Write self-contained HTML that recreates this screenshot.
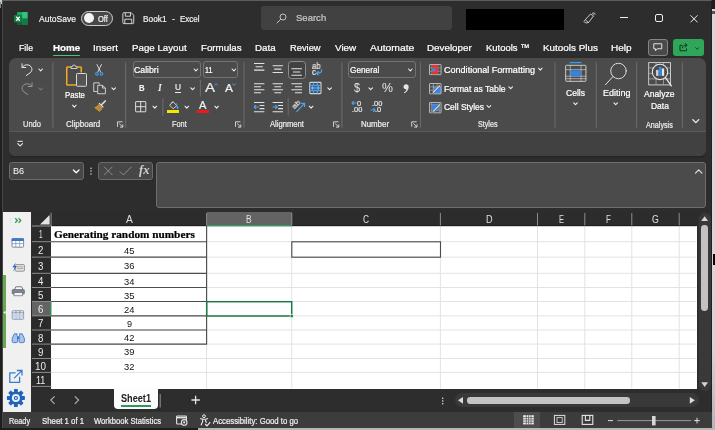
<!DOCTYPE html>
<html>
<head>
<meta charset="utf-8">
<title>Book1 - Excel</title>
<style>
*{box-sizing:border-box;margin:0;padding:0}
html,body{width:715px;height:430px;overflow:hidden;background:#1e1e1e;font-family:"Liberation Sans",sans-serif;}
#w{position:relative;width:715px;height:430px;background:#1e1e1e;overflow:hidden;color:#fff;font-size:9px}
.a{position:absolute}
.t{position:absolute;white-space:nowrap;transform-origin:0 50%;-webkit-text-stroke:0.22px currentColor}
.g{will-change:transform}
#tx{position:absolute;left:0;top:0;width:715px;height:430px;will-change:transform}
svg{position:absolute;overflow:visible}
#win{left:2px;top:0;width:710px;height:428px;background:#2d2d2d;border:1px solid #484848;border-top-color:#5e5e5e;border-right-color:#222}
#search{left:261px;top:6px;width:191px;height:24px;background:#414141;border-radius:3px}
#blk{left:466px;top:9px;width:98px;height:21px;background:#000}
#rib{left:9px;top:58px;width:697px;height:98px;background:#4b4b4b;border-radius:7px}
#ribline{left:9px;top:130.6px;width:697px;height:1.4px;background:#595959}
.sep{position:absolute;width:1px;background:#6a6a6a;top:62px;height:66px}
.ssep{position:absolute;width:1px;background:#6a6a6a;height:17px}
.box{position:absolute;top:61px;height:17px;border:1px solid #737373;border-radius:3px}
#nbox{left:9px;top:162px;width:75px;height:18px;background:#474747;border:1px solid #6a6a6a;border-radius:3px}
#fxbox{left:98px;top:162px;width:55px;height:18px;background:#474747;border:1px solid #6a6a6a;border-radius:3px}
#finp{left:156px;top:162px;width:550px;height:46px;background:#4b4b4b;border:1px solid #6e6e6e;border-radius:3px}
#side{left:3px;top:212px;width:28px;height:200px;background:#f0f0f0}
#sgreen{left:3px;top:275px;width:3px;height:73px;background:#6aa84f}
#grid{left:51px;top:226px;width:646px;height:163px;background:#fff}
#colh{left:32px;top:212px;width:665px;height:14px;background:#2c2c2c}
#rowh{left:32px;top:226px;width:19px;height:161.5px;background:#2b2b2b}
.hv{position:absolute;top:213px;width:1px;height:13px;background:#7a7a7a}
.rh{position:absolute;left:32px;width:19px;height:1px;background:#7a7a7a}
.gv{position:absolute;top:226px;width:1px;height:162px;background:#e2e2e2}
.gh{position:absolute;left:52px;width:645px;height:1px;background:#e2e2e2}
.bh{position:absolute;left:51px;width:156px;height:1px;background:#555}
#vs{left:699px;top:212.6px;width:11.6px;height:178px;background:#393939;border-radius:5.8px}
#vth{left:701.3px;top:224.8px;width:6.7px;height:86.2px;background:#c2c2c2;border-radius:3.4px}
#hs{left:454.6px;top:393px;width:244.6px;height:14px;background:#393939;border-radius:7px}
#hth{left:466.7px;top:397px;width:163.8px;height:6.6px;background:#c4c4c4;border-radius:3.3px}
#status{left:3px;top:412px;width:708.5px;height:15.6px;background:#3c3c3c}
#vsel{left:514px;top:412px;width:26px;height:15.6px;background:#4d4d4d}
#stab{left:114.4px;top:388.6px;width:43.6px;height:20.6px;background:#fdfdfd;border-radius:0 0 4px 4px}
#stabu{left:120.6px;top:405.4px;width:30.4px;height:2px;background:#2a9a5a}
</style>
</head>
<body>
<div id="w">
<div id="win" class="a"></div>
<!-- outside-window bits -->
<div class="a" style="left:0;top:0;width:1.5px;height:4px;background:#c8c8c8"></div>
<div class="a" style="left:0;top:2px;width:1px;height:6px;background:#8a8a8a"></div>
<div class="a" style="left:712px;top:8.5px;width:3px;height:421.5px;background:linear-gradient(#d8d8d8,#d6d6d6 80%,#b4b4b4)"></div>
<div class="a" style="left:197.5px;top:427.7px;width:517.5px;height:2.3px;background:#b6b6b6"></div>
<div class="a" style="left:712.8px;top:253.8px;width:2.2px;height:11px;background:#0a0a0a"></div>
<div class="a" style="left:712.4px;top:11px;width:2.6px;height:3px;background:#555"></div>
<!-- TITLE -->
<div id="search" class="a"></div>
<div id="blk" class="a"></div>
<svg style="left:14px;top:11.5px" width="13.5" height="13" viewBox="0 0 27 26">
 <rect x="6" y="0" width="21" height="26" rx="2" fill="#21a366"/>
 <rect x="16.5" y="0" width="10.5" height="13" fill="#33c481"/>
 <rect x="16.5" y="13" width="10.5" height="13" fill="#107c41"/>
 <rect x="6" y="13" width="10.5" height="13" fill="#185c37"/>
 <rect x="0" y="6" width="16" height="15" rx="1.5" fill="#107c41"/>
 <path d="M4.5 9.5 L11.5 17.5 M11.5 9.5 L4.5 17.5" stroke="#fff" stroke-width="2.4" fill="none"/>
</svg>
<!-- autosave toggle -->
<div class="a" style="left:80.5px;top:10.5px;width:32.5px;height:15.5px;border:1.1px solid #cdcdcd;border-radius:8px;background:#484848"></div>
<div class="a" style="left:83.5px;top:13.3px;width:10px;height:10px;border-radius:5px;background:#f4f4f4"></div>
<!-- save icon -->
<svg style="left:121.5px;top:12.3px" width="12.6" height="12.4" viewBox="0 0 25 25" fill="none" stroke="#dcdcdc" stroke-width="1.9">
 <path d="M1.5 3.5 a2 2 0 0 1 2-2 H18.5 L23.5 6.5 V21.5 a2 2 0 0 1-2 2 H3.5 a2 2 0 0 1-2-2 Z"/>
 <path d="M6.5 1.5 V8.5 H17 V1.5"/>
 <path d="M5.5 23.5 V14.5 H19.5 V23.5"/>
</svg>
<!-- search icon -->
<svg style="left:276px;top:12.5px" width="11" height="11" viewBox="0 0 22 22" fill="none" stroke="#c8c8c8" stroke-width="1.9">
 <circle cx="14" cy="8" r="6"/><path d="M9.6 12.4 L1.5 20.5"/>
</svg>
<!-- pen icon -->
<svg style="left:583px;top:12px" width="13" height="12" viewBox="0 0 26 24" fill="none" stroke="#e0e0e0" stroke-width="1.7" stroke-linejoin="round">
 <path d="M15 4 L21 8 L11 21 L5 22 L2 19 L4 16 Z"/>
 <path d="M5 16 L11 21"/>
 <path d="M18 2 L23 5.5 M21 1 L25 4"/>
</svg>
<!-- window controls -->
<div class="a" style="left:620px;top:17px;width:7.5px;height:1.2px;background:#f0f0f0"></div>
<div class="a" style="left:654.5px;top:14.3px;width:8.5px;height:8.2px;border:1.2px solid #f0f0f0;border-radius:2px"></div>
<svg style="left:690.3px;top:14.8px" width="8" height="7.6" viewBox="0 0 16 15" fill="none" stroke="#f0f0f0" stroke-width="2"><path d="M1 0.5 L15 14.5 M15 0.5 L1 14.5"/></svg>

<!-- TABS -->
<div class="a" style="left:52.5px;top:54.7px;width:27.5px;height:1.6px;background:#49c27a;border-radius:1px"></div>
<div class="a" style="left:648px;top:38.5px;width:19.5px;height:17.5px;background:#4a4a4a;border:1px solid #858585;border-radius:3px"></div>
<svg style="left:652.8px;top:42.5px" width="9.5" height="8.5" viewBox="0 0 19 17" fill="none" stroke="#f0f0f0" stroke-width="1.8" stroke-linejoin="round">
 <path d="M1.5 1.5 H17.5 V11.5 H8.5 L5 15.5 V11.5 H1.5 Z"/>
</svg>
<div class="a" style="left:673px;top:38.5px;width:30.5px;height:17.5px;background:#2fa65a;border-radius:3px"></div>
<svg style="left:678.5px;top:42px" width="9.5" height="9.5" viewBox="0 0 19 19" fill="none" stroke="#14301f" stroke-width="1.9" stroke-linejoin="round">
 <path d="M7 6.5 H2 V17.5 H15 V13"/>
 <path d="M6.5 12.5 C7 8 10 6.5 14 6.5 M11.5 2.5 L16.5 6.5 L11.5 10.5"/>
</svg>
<svg style="left:694.8px;top:47px" width="4.4" height="3" viewBox="0 0 9 6" fill="none" stroke="#14301f" stroke-width="1.8"><path d="M0.8 0.8 L4.5 4.8 L8.2 0.8"/></svg>

<!-- RIBBON -->
<div id="rib" class="a"></div>
<div class="a" style="left:9px;top:131.5px;width:697px;height:24.5px;background:#414141;border-radius:0 0 7px 7px"></div>
<div class="a" style="left:11px;top:156px;width:693px;height:2.5px;background:linear-gradient(#242424,#2d2d2d)"></div>
<div id="ribline" class="a"></div>
<!-- separators -->
<svg style="left:0;top:0" width="715" height="160" fill="none" stroke="#6a6a6a" stroke-width="1.1">
 <path d="M52.9 62.2 V127.8 M125.6 62.2 V127.8 M244.0 62.2 V127.8 M341.9 62.2 V127.8 M420.5 62.2 V127.8 M555.0 62.2 V127.8 M596.3 62.2 V127.8 M636.6 62.2 V127.8 M682.4 62.2 V127.8"/>
 <path d="M200.4 79.8 V96.6 M162.9 98.2 V115.4 M288.2 97.8 V115.4"/>
</svg>
<!-- chevrons (white) -->
<svg style="left:0;top:0" width="715" height="160" stroke="#f2f2f2">
 <path transform="translate(38.4 68.4)" d="M0.5 0.6 L2.3 2.5 L4.1 0.6" fill="none" stroke-width="1.05" stroke-linecap="round" stroke-linejoin="round"/>
 <path transform="translate(38.4 87.4)" d="M0.5 0.6 L2.3 2.5 L4.1 0.6" fill="none" stroke-width="1.05" stroke-linecap="round" stroke-linejoin="round" stroke="#7a7a7a"/>
 <path transform="translate(72 104.6)" d="M0.5 0.6 L2.3 2.5 L4.1 0.6" fill="none" stroke-width="1.05" stroke-linecap="round" stroke-linejoin="round"/>
 <path transform="translate(111.4 87.2)" d="M0.5 0.6 L2.3 2.5 L4.1 0.6" fill="none" stroke-width="1.05" stroke-linecap="round" stroke-linejoin="round"/>
 <path transform="translate(193.6 68.4)" d="M0.5 0.6 L2.3 2.5 L4.1 0.6" fill="none" stroke-width="1.05" stroke-linecap="round" stroke-linejoin="round"/>
 <path transform="translate(231.6 68.4)" d="M0.5 0.6 L2.3 2.5 L4.1 0.6" fill="none" stroke-width="1.05" stroke-linecap="round" stroke-linejoin="round"/>
 <path transform="translate(190.3 87.2)" d="M0.5 0.6 L2.3 2.5 L4.1 0.6" fill="none" stroke-width="1.05" stroke-linecap="round" stroke-linejoin="round"/>
 <path transform="translate(152.5 105.6)" d="M0.5 0.6 L2.3 2.5 L4.1 0.6" fill="none" stroke-width="1.05" stroke-linecap="round" stroke-linejoin="round"/>
 <path transform="translate(184.5 105.6)" d="M0.5 0.6 L2.3 2.5 L4.1 0.6" fill="none" stroke-width="1.05" stroke-linecap="round" stroke-linejoin="round"/>
 <path transform="translate(214.3 105.6)" d="M0.5 0.6 L2.3 2.5 L4.1 0.6" fill="none" stroke-width="1.05" stroke-linecap="round" stroke-linejoin="round"/>
 <path transform="translate(327.3 87.2)" d="M0.5 0.6 L2.3 2.5 L4.1 0.6" fill="none" stroke-width="1.05" stroke-linecap="round" stroke-linejoin="round"/>
 <path transform="translate(308.8 105.6)" d="M0.5 0.6 L2.3 2.5 L4.1 0.6" fill="none" stroke-width="1.05" stroke-linecap="round" stroke-linejoin="round"/>
 <path transform="translate(408 68.4)" d="M0.5 0.6 L2.3 2.5 L4.1 0.6" fill="none" stroke-width="1.05" stroke-linecap="round" stroke-linejoin="round"/>
 <path transform="translate(368.4 87.2)" d="M0.5 0.6 L2.3 2.5 L4.1 0.6" fill="none" stroke-width="1.05" stroke-linecap="round" stroke-linejoin="round"/>
 <path transform="translate(538 67.6)" d="M0.5 0.6 L2.3 2.5 L4.1 0.6" fill="none" stroke-width="1.05" stroke-linecap="round" stroke-linejoin="round"/>
 <path transform="translate(508.4 86.2)" d="M0.5 0.6 L2.3 2.5 L4.1 0.6" fill="none" stroke-width="1.05" stroke-linecap="round" stroke-linejoin="round"/>
 <path transform="translate(486.6 105)" d="M0.5 0.6 L2.3 2.5 L4.1 0.6" fill="none" stroke-width="1.05" stroke-linecap="round" stroke-linejoin="round"/>
 <path transform="translate(573.2 102.2)" d="M0.5 0.6 L2.3 2.5 L4.1 0.6" fill="none" stroke-width="1.05" stroke-linecap="round" stroke-linejoin="round"/>
 <path transform="translate(613.4 102.2)" d="M0.5 0.6 L2.3 2.5 L4.1 0.6" fill="none" stroke-width="1.05" stroke-linecap="round" stroke-linejoin="round"/>
 <path transform="translate(117 121.3)" d="M0.5 5.5 V0.5 H5.5 M2.2 2.2 L5.6 5.6 M5.8 3 V5.8 H3" fill="none" stroke="#e0e0e0" stroke-width="0.9"/>
 <path transform="translate(235 121.3)" d="M0.5 5.5 V0.5 H5.5 M2.2 2.2 L5.6 5.6 M5.8 3 V5.8 H3" fill="none" stroke="#e0e0e0" stroke-width="0.9"/>
 <path transform="translate(333 121.3)" d="M0.5 5.5 V0.5 H5.5 M2.2 2.2 L5.6 5.6 M5.8 3 V5.8 H3" fill="none" stroke="#e0e0e0" stroke-width="0.9"/>
 <path transform="translate(411.2 121.3)" d="M0.5 5.5 V0.5 H5.5 M2.2 2.2 L5.6 5.6 M5.8 3 V5.8 H3" fill="none" stroke="#e0e0e0" stroke-width="0.9"/>
 <path d="M692.8 119.6 L695.8 122.6 L698.8 119.6" fill="none" stroke="#f2f2f2" stroke-width="1.3" stroke-linecap="round" stroke-linejoin="round"/>
 <!-- QAT customize -->
 <path d="M17.5 141.3 H22.8" stroke="#f2f2f2" stroke-width="1" fill="none"/>
 <path d="M17.8 143.6 L20.15 146 L22.5 143.6" fill="none" stroke="#f2f2f2" stroke-width="1.05" stroke-linecap="round" stroke-linejoin="round"/>
</svg>
<!-- undo / redo -->
<svg style="left:20.5px;top:63px" width="12" height="13" viewBox="0 0 24 26" fill="none" stroke="#ececec" stroke-width="1.9" stroke-linecap="round" stroke-linejoin="round">
 <path d="M2 1.5 V9 H9.5"/><path d="M2.5 8.5 C6 3.5 13 2 18 5.5 C23 9 23 16 18.5 19.5 L10.5 25"/>
</svg>
<svg style="left:20.5px;top:81.6px" width="12" height="13" viewBox="0 0 24 26" fill="none" stroke="#9a9a9a" stroke-width="1.9" stroke-linecap="round" stroke-linejoin="round">
 <path d="M22 1.5 V9 H14.5"/><path d="M21.5 8.5 C18 3.5 11 2 6 5.5 C1 9 1 16 5.5 19.5 L13.5 25"/>
</svg>
<!-- paste -->
<svg style="left:65.5px;top:64px" width="21.5" height="23" viewBox="0 0 43 46" fill="none" stroke-linejoin="round">
 <path d="M10 6 H3 a1.5 1.5 0 0 0 -1.5 1.5 V40.5 a1.5 1.5 0 0 0 1.5 1.5 H20 M22 6 H29 a1.5 1.5 0 0 1 1.5 1.5 V17" stroke="#f5a623" stroke-width="3.1"/>
 <path d="M10 9 V5.5 H12.5 a3.5 3.5 0 0 1 7 0 H22 V9 Z" stroke="#d8d8d8" stroke-width="1.8" fill="#4b4b4b"/>
 <rect x="21" y="19" width="20" height="25.5" rx="1.5" stroke="#d8d8d8" stroke-width="2" fill="#555"/>
</svg>
<!-- cut -->
<svg style="left:95.4px;top:64px" width="8.4" height="12" viewBox="0 0 17 24" fill="none" stroke-linecap="round">
 <path d="M4 1 L11.6 16.4 M13 1 L5.4 16.4" stroke="#ececec" stroke-width="1.7"/>
 <circle cx="3.9" cy="19.6" r="2.7" stroke="#3d9cf0" stroke-width="2.2"/><circle cx="13.1" cy="19.6" r="2.7" stroke="#3d9cf0" stroke-width="2.2"/>
</svg>
<!-- copy -->
<svg style="left:93.2px;top:81.8px" width="13.4" height="12.6" viewBox="0 0 27 25" fill="none" stroke="#dcdcdc" stroke-width="1.8" stroke-linejoin="round">
 <path d="M9 19 H1.5 V1.5 H12.5 V5"/>
 <path d="M9.5 6.5 H19 L25 12 V23.5 H9.5 Z" fill="#4b4b4b"/><path d="M19 6.5 V12 H25"/>
</svg>
<!-- format painter -->
<svg style="left:94px;top:100.4px" width="12.6" height="11.8" viewBox="0 0 25 24" fill="none" stroke-linejoin="round">
 <path d="M22.6 2 L15.4 9.2" stroke="#e0e0e0" stroke-width="3.4" stroke-linecap="round"/>
 <path d="M10.4 7 L18 14.2" stroke="#e0e0e0" stroke-width="2.4" stroke-linecap="round"/>
 <path d="M9.2 9.4 L15.8 15.8 C15 19.4 13 21.8 10.6 23 L1.4 15.4 C4.6 14.8 7.4 12.8 9.2 9.4 Z" stroke="#f5a623" stroke-width="1.6" fill="#f5b040" fill-opacity=".55"/>
 <path d="M5 17.6 L8 14.4 M8.4 20.4 L11.4 17" stroke="#f5a623" stroke-width="1.1"/>
</svg>
<!-- font boxes -->
<div class="box" style="left:132.5px;width:68px"></div>
<div class="box" style="left:202.5px;width:35.5px"></div>
<div class="a" style="left:175.3px;top:92px;width:6.2px;height:1px;background:#ececec"></div>
<!-- grow/shrink carets -->
<svg style="left:214px;top:82.6px" width="4.2" height="3" viewBox="0 0 8 6" fill="none" stroke="#4aa3f0" stroke-width="1.7"><path d="M0.8 5 L4 1.2 L7.2 5"/></svg>
<svg style="left:231.6px;top:83.4px" width="4.2" height="3" viewBox="0 0 8 6" fill="none" stroke="#4aa3f0" stroke-width="1.7"><path d="M0.8 1 L4 4.8 L7.2 1"/></svg>
<!-- borders -->
<svg style="left:134.8px;top:101.2px" width="11.4" height="11.4" viewBox="0 0 23 23" fill="none" stroke="#e6e6e6" stroke-width="1.9"><rect x="1.2" y="1.2" width="20.6" height="20.6" rx="1"/><path d="M11.5 1 V22 M1 11.5 H22"/></svg>
<!-- fill -->
<svg style="left:168.6px;top:100.8px" width="10" height="8.6" viewBox="0 0 20 17" fill="none" stroke-linejoin="round">
 <path d="M7.5 1 L15.5 9 L8.5 15.5 L1.5 8.5 Z" stroke="#e6e6e6" stroke-width="1.7"/>
 <path d="M8 1.5 L5 4.5" stroke="#e6e6e6" stroke-width="1.5"/>
 <path d="M16.5 10 C18.5 12.5 19 14 17.7 15 C16.2 15.8 15 14.5 16.5 10 Z M14 4 L17 8" stroke="#4aa3f0" stroke-width="1.6" fill="#4aa3f0"/>
</svg>
<div class="a" style="left:167px;top:110px;width:12px;height:2.8px;background:#f5e800"></div>
<div class="a" style="left:196.8px;top:110px;width:12px;height:2.8px;background:#f01818"></div>

<!-- alignment -->
<div class="a" style="left:288.2px;top:60.8px;width:17.4px;height:17.8px;border:1px solid #8e8e8e;border-radius:3.5px;background:#414141"></div>
<svg style="left:0;top:0" width="715" height="160" fill="none" stroke="#e2e2e2" stroke-width="1.05">
 <!-- top / middle / bottom align -->
 <path d="M254 63.5 H264.4 M255.6 66.8 H262.8 M254 70.1 H264.4"/>
 <path d="M272.6 65.8 H283 M274.2 69.1 H281.4 M272.6 72.4 H283"/>
 <path d="M291.4 68.7 H302 M293 72 H300.4 M291.4 75.2 H302"/>
 <!-- left / center / right -->
 <path d="M254 83.8 H264.4 M254 86.8 H261 M254 89.8 H264.4 M254 92.8 H261"/>
 <path d="M272.6 83.8 H283 M274.4 86.8 H281.2 M272.6 89.8 H283 M274.4 92.8 H281.2"/>
 <path d="M291.4 83.8 H302 M295 86.8 H302 M291.4 89.8 H302 M295 92.8 H302"/>
 <!-- indent dec -->
 <path d="M254 102.4 H264.4 M259.6 105.5 H264.4 M259.6 108.6 H264.4 M254 111.7 H264.4"/>
 <path d="M254.2 107 H258.8 M256 105.2 L254.2 107 L256 108.8" stroke="#4aa3f0" stroke-width="1.2"/>
 <!-- indent inc -->
 <path d="M272.6 102.4 H283 M278.2 105.5 H283 M278.2 108.6 H283 M272.6 111.7 H283"/>
 <path d="M272.6 107 H277.2 M275.4 105.2 L277.2 107 L275.4 108.8" stroke="#4aa3f0" stroke-width="1.2"/>
 <!-- wrap arrow -->
 <path d="M321.4 69.4 C322.4 72 321 73.2 316.6 73.2 M318.6 71.2 L316.4 73.2 L318.6 75.2" stroke="#4aa3f0" stroke-width="1.2"/>
 <!-- merge -->
 <rect x="309.8" y="82.4" width="11.2" height="11.2" rx="0.8" stroke="#d8d8d8" stroke-width="1.1"/>
 <path d="M310.2 85.3 H320.6 M310.2 90.7 H320.6 M313.5 82.6 V85.3 M317.3 82.6 V85.3 M313.5 90.7 V93.4 M317.3 90.7 V93.4" stroke="#4aa3f0" stroke-width="1.2"/>
 <rect x="310.6" y="85.9" width="9.6" height="4.2" fill="#2f6fb8" opacity=".55" stroke="none"/>
 <path d="M311.6 88 H319.2 M313.2 86.5 L311.6 88 L313.2 89.5 M317.6 86.5 L319.2 88 L317.6 89.5" stroke="#6ab8ff" stroke-width="1.1"/>
 <!-- orientation arrow -->
 <path d="M296.4 111.8 L304.4 103.6 M301 103.4 H304.6 V107" stroke="#4aa3f0" stroke-width="1.2"/>
 <!-- decimals arrows -->
 <path d="M352 103 H356.6 M353.8 101.2 L352 103 L353.8 104.8" stroke="#4aa3f0" stroke-width="1.1"/>
 <path d="M370.6 110 H375.2 M373.4 108.2 L375.2 110 L373.4 111.8" stroke="#4aa3f0" stroke-width="1.1"/>
</svg>
<div class="t g" style="left:311.6px;top:62.2px;font-size:8.4px;color:#e6e6e6;line-height:8px;height:8px;transform:scaleX(.92)">ab</div>
<div class="t g" style="left:311.6px;top:67.6px;font-size:8.4px;color:#e6e6e6;line-height:8px;height:8px;transform:scaleX(.92)">c</div>
<div class="t g" style="left:292px;top:101px;width:8.4px;text-align:center;font-size:8px;color:#e6e6e6;line-height:8px;height:8px;transform:rotate(-45deg);transform-origin:50% 50%">ab</div>
<!-- number -->
<div class="box" style="left:348px;width:67.5px"></div>
<svg style="left:403.2px;top:83.8px" width="6" height="9.6" viewBox="0 0 12 19"><path d="M6.2 0.6 C9.4 0.6 11.4 2.8 11.4 6 C11.4 11 8 15.6 3 18.4 L1.8 17 C5 14.8 6.8 12.4 7 10.2 C6.7 10.3 6.3 10.4 5.8 10.4 C3 10.4 1 8.4 1 5.6 C1 2.8 3.2 0.6 6.2 0.6 Z" fill="#e4e4e4"/></svg>
<div class="t g" style="left:357px;top:100px;font-size:7.4px;color:#e6e6e6;line-height:7px;height:7px">0</div>
<div class="t g" style="left:352.2px;top:106.2px;font-size:7.4px;color:#e6e6e6;line-height:7px;height:7px">.00</div>
<div class="t g" style="left:372px;top:100px;font-size:7.4px;color:#e6e6e6;line-height:7px;height:7px">.00</div>
<div class="t g" style="left:375.4px;top:106.2px;font-size:7.4px;color:#e6e6e6;line-height:7px;height:7px">.0</div>
<!-- styles icons -->
<svg style="left:429px;top:63.6px" width="12.6" height="11.2" viewBox="0 0 25 22" fill="none">
 <rect x="1" y="1" width="23" height="20" rx="1" stroke="#d0d0d0" stroke-width="1.6"/>
 <path d="M1 7.6 H24 M1 14.3 H24 M5.6 1 V21 M11.6 1 V21 M17.8 1 V21" stroke="#b0b0b0" stroke-width="1"/>
 <rect x="6" y="1.8" width="11.4" height="5.4" fill="#f23030"/><rect x="6" y="8.2" width="5.4" height="5.6" fill="#3a8af0"/><rect x="12" y="8.2" width="5.4" height="5.6" fill="#e24040"/><rect x="6" y="14.8" width="11.4" height="5.4" fill="#f23030"/>
</svg>
<svg style="left:429px;top:82.8px" width="12.6" height="11.6" viewBox="0 0 25 23" fill="none">
 <rect x="8.6" y="7.6" width="15" height="13.6" fill="#2f8af0"/>
 <rect x="1" y="1" width="23" height="20.5" rx="1" stroke="#d0d0d0" stroke-width="1.6"/>
 <path d="M1 7.6 H24 M1 14.3 H9 M8.6 1 V21 M16.3 1 V8" stroke="#c4c4c4" stroke-width="1.2"/>
 <path d="M23.5 5.5 L9.5 20 L5.5 22.5 L7 18 L21 3.5 Z" fill="#ececec" stroke="#4b4b4b" stroke-width="1.2"/>
</svg>
<svg style="left:429px;top:101.6px" width="12.6" height="11.6" viewBox="0 0 25 23" fill="none">
 <rect x="5" y="4.6" width="15.5" height="12.4" fill="#2f8af0"/>
 <rect x="1" y="1" width="23" height="20.5" rx="1" stroke="#d0d0d0" stroke-width="1.6"/>
 <path d="M1 4.4 H24 M1 17.4 H24 M4.8 1 V21 M20.6 1 V21 M12.5 17.4 V21" stroke="#b0b0b0" stroke-width="1"/>
 <path d="M23.5 5.5 L9.5 20 L5.5 22.5 L7 18 L21 3.5 Z" fill="#ececec" stroke="#4b4b4b" stroke-width="1.2"/>
</svg>
<!-- cells -->
<svg style="left:565px;top:61px" width="21.6" height="21" viewBox="0 0 43 42" fill="none">
 <path d="M9 3.2 H33" stroke="#3d9cf0" stroke-width="2.6"/>
 <rect x="1.2" y="8.6" width="40.6" height="32" rx="1.5" stroke="#d8d8d8" stroke-width="1.8"/>
 <path d="M1 17.4 H42 M1 30.4 H42 M1 35.4 H42 M10.4 8.6 V40.6 M32 8.6 V40.6" stroke="#cdcdcd" stroke-width="1.4"/>
 <rect x="11.4" y="19" width="19.6" height="10.4" fill="#2f86ea"/>
</svg>
<!-- editing (magnifier) -->
<svg style="left:604px;top:61.5px" width="24" height="24" viewBox="0 0 48 48" fill="none" stroke="#dcdcdc" stroke-width="2" stroke-linecap="round">
 <circle cx="29" cy="18" r="15.5"/><path d="M18 29 L3 45.5"/>
</svg>
<!-- analyze data -->
<svg style="left:647.6px;top:62.2px" width="24" height="24.8" viewBox="0 0 48 50" fill="none">
 <rect x="1.2" y="1.2" width="44" height="45" stroke="#d8d8d8" stroke-width="1.8"/>
 <path d="M1 12 H45 M1 23 H45 M1 34 H45 M16 1 V46 M31 1 V46" stroke="#bdbdbd" stroke-width="1.3"/>
 <circle cx="24" cy="20" r="15.5" fill="#4b4b4b" stroke="#e6e6e6" stroke-width="2.2"/>
 <rect x="16" y="16" width="5" height="12" fill="#cfcfcf"/><rect x="21.6" y="10" width="5.6" height="18" fill="#2f8af0"/><rect x="27.8" y="13" width="4.6" height="15" fill="#e8e8e8"/>
 <path d="M35 31.5 L47 48" stroke="#e6e6e6" stroke-width="2.8" stroke-linecap="round"/>
</svg>


<!-- FORMULA -->
<div id="nbox" class="a"></div>
<div id="fxbox" class="a"></div>
<div id="finp" class="a"></div>
<svg style="left:0;top:158px" width="715" height="52" viewBox="0 158 715 52" fill="none">
 <path d="M73.4 170 L76.2 172.8 L79 170" stroke="#fff" stroke-width="1.3" stroke-linecap="round" stroke-linejoin="round"/>
 <circle cx="91" cy="168.2" r="0.75" fill="#e0e0e0"/><circle cx="91" cy="171.1" r="0.75" fill="#e0e0e0"/><circle cx="91" cy="174" r="0.75" fill="#e0e0e0"/>
 <path d="M104.2 166.8 L112.4 175 M112.4 166.8 L104.2 175" stroke="#8c8c8c" stroke-width="1"/>
 <path d="M119.8 171.4 L123.4 175 L131.6 166.6" stroke="#8c8c8c" stroke-width="1"/>
 <path d="M681 182.6 L684.2 179.4 L687.4 182.6" stroke="#e8e8e8" stroke-width="1.1" transform="translate(14.5,-9.5)" stroke-linecap="round" stroke-linejoin="round"/>
</svg>


<!-- GRID -->
<div id="side" class="a"></div>
<div id="sgreen" class="a"></div>
<div id="colh" class="a"></div>
<div id="rowh" class="a"></div>
<div id="grid" class="a"></div>
<!-- selected header B / row 6 -->
<div class="a" style="left:206.5px;top:212.2px;width:85.3px;height:13.2px;background:#636363"></div>
<div class="a" style="left:32px;top:302px;width:19px;height:13.6px;background:#636363"></div>
<!-- select all triangle -->
<svg style="left:39.6px;top:215px" width="9.6" height="9.6" viewBox="0 0 9.6 9.6"><path d="M9.6 0 V9.6 H0 Z" fill="#e4e4e4"/></svg>
<!-- grid lines -->
<svg style="left:0;top:208px" width="715" height="184" viewBox="0 208 715 184" fill="none">
 <path d="M52 241.7 H696.6 M52 257.1 H696.6 M52 273.3 H696.6 M52 287.5 H696.6 M52 301.5 H696.6 M52 315.8 H696.6 M52 330.0 H696.6 M52 344.1 H696.6 M52 358.5 H696.6 M52 372.4 H696.6 M206.6 226 V388.6 M291.8 226 V388.6 M440.4 226 V388.6 M537.5 226 V388.6 M584.8 226 V388.6 M631.8 226 V388.6 M679.2 226 V388.6" stroke="#e3e3e3" stroke-width="1"/>
 <path d="M32 241.7 H51.5 M32 257.1 H51.5 M32 273.3 H51.5 M32 287.5 H51.5 M32 301.5 H51.5 M32 315.8 H51.5 M32 330.0 H51.5 M32 344.1 H51.5 M32 358.5 H51.5 M32 372.4 H51.5 M32 386.4 H51.5" stroke="#8c8c8c" stroke-width="1"/>
 <path d="M32 226 H51.6" stroke="#8c8c8c" stroke-width="1.1"/>
 <path d="M52 225.7 H696.6" stroke="#1c1c1c" stroke-width="1"/>
 <path d="M51.1 212.8 V226.4 M206.6 213 V225.5 M291.8 213 V225.5 M440.4 213 V225.5 M537.5 213 V225.5 M584.8 213 V225.5 M631.8 213 V225.5 M679.2 213 V225.5" stroke="#8c8c8c" stroke-width="1"/>
 <path d="M206.4 225.6 H292" stroke="#2f9a5c" stroke-width="1.3"/>
 <path d="M50.9 302 V315.4" stroke="#2f9a5c" stroke-width="1.2"/>
 <path d="M51 241.7 H207.1 M51 257.1 H207.1 M51 273.3 H207.1 M51 287.5 H207.1 M51 301.5 H207.1 M51 315.8 H207.1 M51 330.0 H207.1 M51 344.1 H207.1 M206.6 226 V344.6" stroke="#4e4e4e" stroke-width="1.15"/>
 <rect x="291.8" y="241.8" width="148.7" height="15.4" stroke="#4a4a4a" stroke-width="1.1"/>
 <rect x="206.7" y="301.7" width="85" height="14.3" stroke="#1f7a48" stroke-width="1.5"/>
 <rect x="290.2" y="314.6" width="3" height="3" fill="#1f7a48" stroke="#fff" stroke-width=".6"/>
</svg>
<!-- sidebar icons -->
<svg style="left:3px;top:212px" width="28" height="200" viewBox="3 212 28 200" fill="none">
 <circle cx="10.8" cy="218.6" r=".45" fill="#b8b8b8"/><circle cx="10.8" cy="220.5" r=".45" fill="#b8b8b8"/><circle cx="10.8" cy="222.4" r=".45" fill="#b8b8b8"/>
 <path d="M15.2 218.3 L17.4 220.5 L15.2 222.7 M18.6 218.3 L20.8 220.5 L18.6 222.7" stroke="#2f9a55" stroke-width="1.25"/>
 <!-- 1 calendar -->
 <rect x="12" y="238.6" width="11.6" height="8.6" rx="1" stroke="#7a8aa0" stroke-width="1" fill="#fff"/>
 <path d="M11.6 239.6 a1.2 1.2 0 0 1 1.2 -1.4 H22.8 a1.2 1.2 0 0 1 1.2 1.4 V241 H11.6 Z" fill="#3f78c8"/>
 <path d="M12 243.6 H23.6 M15.8 241 V247 M19.7 241 V247" stroke="#8a98ac" stroke-width=".8"/>
 <!-- 2 lightning + list -->
 <rect x="15.2" y="264.6" width="9.2" height="6.6" rx=".8" stroke="#8a8a8a" stroke-width=".9" fill="#e4e4e4"/>
 <path d="M17 266.8 H23 M17 268.6 H23" stroke="#9a9a9a" stroke-width=".8"/>
 <path d="M15.8 262.6 L12.4 267.2 H14.6 L13.2 271.4 L17 266 H14.6 Z" fill="#2c64c0"/>
 <!-- 3 printer -->
 <path d="M14.6 289.6 L15.8 286.8 H21.6 L23 289.6" stroke="#6a6a6a" stroke-width=".9" fill="#fafafa"/>
 <rect x="12.2" y="289.6" width="12.2" height="4.4" rx=".8" fill="#7d8794" stroke="#5a636e" stroke-width=".7"/>
 <rect x="14" y="292.6" width="8.6" height="3.2" fill="#f4f4f4" stroke="#6a6a6a" stroke-width=".7"/>
 <!-- 4 table cols -->
 <rect x="12.2" y="310.8" width="11.4" height="8.4" rx=".6" stroke="#7a8aa0" stroke-width=".9" fill="#fff"/>
 <path d="M12.2 312.8 H23.6" stroke="#7a8aa0" stroke-width=".9"/>
 <path d="M16 310.8 V319.2 M19.8 310.8 V319.2" stroke="#7a8aa0" stroke-width=".9"/>
 <rect x="12.8" y="313.4" width="2.8" height="5.4" fill="#c9d7ec"/><rect x="16.6" y="313.4" width="2.8" height="5.4" fill="#c9d7ec"/><rect x="20.4" y="313.4" width="2.8" height="5.4" fill="#c9d7ec"/>
 <path d="M3.4 312.4 L5.6 310.8 V314 Z" fill="#fff"/>
 <!-- 5 binoculars -->
 <path d="M14.4 333.8 h2.6 v1.6 l.6 1.4 v4.6 a1.2 1.2 0 0 1 -1.2 1.2 h-3 a1.2 1.2 0 0 1 -1.2 -1.2 v-3 Z M22.2 333.8 h-2.6 v1.6 l-.6 1.4 v4.6 a1.2 1.2 0 0 0 1.2 1.2 h3 a1.2 1.2 0 0 0 1.2 -1.2 v-3 Z" fill="#a9c4e8" stroke="#3f78c8" stroke-width=".9"/>
 <rect x="17.2" y="336.4" width="2.2" height="2.6" fill="#3f78c8"/>
 <!-- 6 external link -->
 <path d="M15.6 372.8 H9.8 V382.4 H19.6 V376.8" stroke="#3a7bd0" stroke-width="1.3"/>
 <path d="M14 378.4 L21.8 370.6 M16.8 370.5 H22 V375.6" stroke="#3a7bd0" stroke-width="1.3"/>
 <!-- 7 gear -->
 <g transform="translate(15.9 398)">
  <g fill="#1f63c0"><rect x="-1.9" y="-9" width="3.8" height="18" rx=".6"/><rect x="-1.9" y="-9" width="3.8" height="18" rx=".6" transform="rotate(45)"/><rect x="-1.9" y="-9" width="3.8" height="18" rx=".6" transform="rotate(90)"/><rect x="-1.9" y="-9" width="3.8" height="18" rx=".6" transform="rotate(135)"/></g>
  <circle r="6.6" fill="#1f63c0"/><circle r="4" fill="#f0f0f0"/><circle r="2.1" fill="#1f63c0"/><circle r=".9" fill="#f0f0f0"/>
 </g>
</svg>


<!-- BOTTOM -->
<div id="vs" class="a"></div>
<div id="vth" class="a"></div>
<div id="hs" class="a"></div>
<div id="hth" class="a"></div>
<div id="status" class="a"></div>
<div id="vsel" class="a"></div>
<div id="stab" class="a"></div>
<div id="stabu" class="a"></div>
<svg style="left:0;top:380px" width="715" height="50" viewBox="0 380 715 50" fill="none">
 <!-- scroll arrows -->
 <path d="M701.2 221 L704.65 216.2 L708.1 221 Z" fill="#d6d6d6"/>
 <path d="M701.3 382.3 H708 L704.65 387 Z" fill="#d6d6d6"/>
 <path d="M463 397 V403.7 L458 400.35 Z" fill="#dcdcdc"/>
 <path d="M689.8 397 V403.7 L694.8 400.35 Z" fill="#dcdcdc"/>
 <!-- tab nav -->
 <path d="M54.6 396.4 L50.8 400.1 L54.6 403.8" stroke="#b4b4b4" stroke-width="1.1"/>
 <path d="M74.8 396.4 L78.6 400.1 L74.8 403.8" stroke="#b4b4b4" stroke-width="1.1"/>
 <path d="M160.2 394 V407.4" stroke="#8a8a8a" stroke-width="1.1"/>
 <path d="M191.4 400 H199.8 M195.6 395.8 V404.2" stroke="#e6e6e6" stroke-width="1.3"/>
 <circle cx="442.7" cy="398.2" r=".8" fill="#e0e0e0"/><circle cx="442.7" cy="401" r=".8" fill="#e0e0e0"/><circle cx="442.7" cy="403.8" r=".8" fill="#e0e0e0"/>
 <!-- status icons -->
 <rect x="176.6" y="416" width="9.8" height="8" rx=".8" stroke="#e4e4e4" stroke-width="1.1"/>
 <path d="M176.6 417.6 H186.4" stroke="#e4e4e4" stroke-width="1.6"/>
 <circle cx="184.2" cy="422.4" r="2.8" fill="#3c3c3c" stroke="#e4e4e4" stroke-width="1.1"/><circle cx="184.2" cy="422.4" r="1.1" fill="#e4e4e4"/>
 <circle cx="204" cy="416.2" r="1.4" stroke="#ececec" stroke-width="1"/>
 <path d="M200.2 418.6 C202 419.4 206 419.4 208 418.4 M202.6 419.2 V421.6 L201 425.2 M205.6 419.2 V421.2 L206.6 422.6" stroke="#ececec" stroke-width="1.1"/>
 <path d="M205.2 424 L207 425.8 L210.2 422.2" stroke="#ececec" stroke-width="1.2"/>
 <!-- view buttons -->
 <rect x="523.2" y="415.2" width="10.6" height="9.2" fill="#f0f0f0"/>
 <path d="M526.3 415 V424.6 M528.6 415 V424.6 M531 415 V424.6 M523 417.6 H534 M523 419.9 H534 M523 422.2 H534" stroke="#4d4d4d" stroke-width=".7"/>
 <rect x="554.4" y="415.4" width="10.4" height="9" stroke="#e0e0e0" stroke-width="1"/>
 <rect x="557" y="417.6" width="5.2" height="5" stroke="#e0e0e0" stroke-width=".8"/>
 <rect x="582.2" y="415.4" width="10.6" height="9" stroke="#e6e6e6" stroke-width="1.1"/>
 <path d="M585.4 415.4 V420.4 H589.8 V415.4" stroke="#e6e6e6" stroke-width="1.1"/>
 <!-- zoom -->
 <path d="M608 420.6 H613" stroke="#e0e0e0" stroke-width="1"/>
 <path d="M617.4 420.6 H691.2" stroke="#9a9a9a" stroke-width="1"/>
 <rect x="652" y="416" width="3.6" height="9.4" fill="#d6d6d6"/>
 <path d="M694.2 420.6 H699.8 M697 417.8 V423.4" stroke="#e0e0e0" stroke-width="1"/>
</svg>


<div id="tx">
<div class="t" style="left:39.0px;top:12.0px;font-size:9.4px;color:#f0f0f0;transform:scaleX(0.910);height:14px;line-height:14px;">AutoSave</div>
<div class="t" style="left:97.9px;top:12.0px;font-size:8.4px;color:#f0f0f0;transform:scaleX(0.897);height:14px;line-height:14px;">Off</div>
<div class="t" style="left:142.7px;top:12.0px;font-size:9.4px;color:#f0f0f0;transform:scaleX(0.884);height:14px;line-height:14px;">Book1</div>
<div class="t" style="left:172.0px;top:12.0px;font-size:9.4px;color:#f0f0f0;transform:scaleX(0.896);height:14px;line-height:14px;">-</div>
<div class="t" style="left:180.2px;top:12.0px;font-size:9.4px;color:#f0f0f0;transform:scaleX(0.854);height:14px;line-height:14px;">Excel</div>
<div class="t" style="left:296.4px;top:11.2px;font-size:9.4px;color:#c8c8c8;transform:scaleX(1.016);height:14px;line-height:14px;">Search</div>
<div class="t" style="left:19.0px;top:40.8px;font-size:9.8px;color:#fff;transform:scaleX(0.886);height:14px;line-height:14px;">File</div>
<div class="t" style="left:52.7px;top:40.8px;font-size:9.8px;color:#fff;transform:scaleX(1.002);height:14px;line-height:14px;font-weight:700;">Home</div>
<div class="t" style="left:93.0px;top:40.8px;font-size:9.8px;color:#fff;transform:scaleX(1.020);height:14px;line-height:14px;">Insert</div>
<div class="t" style="left:132.0px;top:40.8px;font-size:9.8px;color:#fff;transform:scaleX(0.992);height:14px;line-height:14px;">Page Layout</div>
<div class="t" style="left:200.7px;top:40.8px;font-size:9.8px;color:#fff;transform:scaleX(0.994);height:14px;line-height:14px;">Formulas</div>
<div class="t" style="left:255.0px;top:40.8px;font-size:9.8px;color:#fff;transform:scaleX(0.995);height:14px;line-height:14px;">Data</div>
<div class="t" style="left:289.7px;top:40.8px;font-size:9.8px;color:#fff;transform:scaleX(0.953);height:14px;line-height:14px;">Review</div>
<div class="t" style="left:334.6px;top:40.8px;font-size:9.8px;color:#fff;transform:scaleX(1.007);height:14px;line-height:14px;">View</div>
<div class="t" style="left:369.5px;top:40.8px;font-size:9.8px;color:#fff;transform:scaleX(1.056);height:14px;line-height:14px;">Automate</div>
<div class="t" style="left:427.2px;top:40.8px;font-size:9.8px;color:#fff;transform:scaleX(1.003);height:14px;line-height:14px;">Developer</div>
<div class="t" style="left:486.3px;top:40.8px;font-size:9.8px;color:#fff;transform:scaleX(0.967);height:14px;line-height:14px;">Kutools ™</div>
<div class="t" style="left:543.4px;top:40.8px;font-size:9.8px;color:#fff;transform:scaleX(1.010);height:14px;line-height:14px;">Kutools Plus</div>
<div class="t" style="left:611.4px;top:40.8px;font-size:9.8px;color:#fff;transform:scaleX(1.022);height:14px;line-height:14px;">Help</div>
<div class="t" style="left:22.7px;top:117.3px;font-size:8.3px;color:#ececec;transform:scaleX(0.907);height:14px;line-height:14px;">Undo</div>
<div class="t" style="left:66.0px;top:117.3px;font-size:8.3px;color:#ececec;transform:scaleX(0.966);height:14px;line-height:14px;">Clipboard</div>
<div class="t" style="left:171.7px;top:117.3px;font-size:8.3px;color:#ececec;transform:scaleX(0.885);height:14px;line-height:14px;">Font</div>
<div class="t" style="left:269.8px;top:117.3px;font-size:8.3px;color:#ececec;transform:scaleX(0.921);height:14px;line-height:14px;">Alignment</div>
<div class="t" style="left:361.0px;top:117.3px;font-size:8.3px;color:#ececec;transform:scaleX(0.949);height:14px;line-height:14px;">Number</div>
<div class="t" style="left:477.7px;top:117.3px;font-size:8.3px;color:#ececec;transform:scaleX(0.863);height:14px;line-height:14px;">Styles</div>
<div class="t" style="left:646.2px;top:117.5px;font-size:8.3px;color:#ececec;transform:scaleX(0.867);height:14px;line-height:14px;">Analysis</div>
<div class="t" style="left:64.5px;top:88.4px;font-size:9px;color:#fff;transform:scaleX(0.865);height:14px;line-height:14px;">Paste</div>
<div class="t" style="left:134.3px;top:62.8px;font-size:9px;color:#fff;transform:scaleX(0.968);height:14px;line-height:14px;">Calibri</div>
<div class="t" style="left:204.6px;top:62.8px;font-size:9px;color:#fff;transform:scaleX(0.792);height:14px;line-height:14px;">11</div>
<div class="t" style="left:350.3px;top:62.8px;font-size:9px;color:#fff;transform:scaleX(0.915);height:14px;line-height:14px;">General</div>
<div class="t" style="left:138.6px;top:80.6px;font-size:9.5px;color:#f0f0f0;transform:scaleX(0.815);height:14px;line-height:14px;font-weight:700;">B</div>
<div class="t" style="left:158.0px;top:80.6px;font-size:9.5px;color:#f0f0f0;transform:scaleX(1.135);height:14px;line-height:14px;font-family:'Liberation Serif',serif;font-style:italic;">I</div>
<div class="t" style="left:175.4px;top:80.2px;font-size:9.5px;color:#f0f0f0;transform:scaleX(0.873);height:14px;line-height:14px;">U</div>
<div class="t" style="left:205.0px;top:80.6px;font-size:12.5px;color:#f0f0f0;transform:scaleX(1.199);height:14px;line-height:14px;">A</div>
<div class="t" style="left:225.0px;top:81.2px;font-size:10.5px;color:#f0f0f0;transform:scaleX(1.140);height:14px;line-height:14px;">A</div>
<div class="t" style="left:199.4px;top:98.8px;font-size:10.4px;color:#f0f0f0;transform:scaleX(1.067);height:14px;line-height:14px;">A</div>
<div class="t" style="left:353.6px;top:81.2px;font-size:13.5px;color:#e6e6e6;transform:scaleX(0.812);height:14px;line-height:14px;-webkit-text-stroke:0;">$</div>
<div class="t" style="left:381.5px;top:81.2px;font-size:13.5px;color:#e6e6e6;transform:scaleX(0.915);height:14px;line-height:14px;-webkit-text-stroke:0;">%</div>
<div class="t" style="left:444.0px;top:62.8px;font-size:9px;color:#fff;transform:scaleX(1.005);height:14px;line-height:14px;">Conditional Formatting</div>
<div class="t" style="left:444.0px;top:81.5px;font-size:9px;color:#fff;transform:scaleX(0.957);height:14px;line-height:14px;">Format as Table</div>
<div class="t" style="left:444.0px;top:100.4px;font-size:9px;color:#fff;transform:scaleX(0.941);height:14px;line-height:14px;">Cell Styles</div>
<div class="t" style="left:566.0px;top:85.6px;font-size:9px;color:#fff;transform:scaleX(0.949);height:14px;line-height:14px;">Cells</div>
<div class="t" style="left:602.7px;top:85.6px;font-size:9px;color:#fff;transform:scaleX(0.995);height:14px;line-height:14px;">Editing</div>
<div class="t" style="left:644.4px;top:87.0px;font-size:9px;color:#fff;transform:scaleX(0.952);height:14px;line-height:14px;">Analyze</div>
<div class="t" style="left:650.7px;top:98.7px;font-size:9px;color:#fff;transform:scaleX(0.941);height:14px;line-height:14px;">Data</div>
<div class="t" style="left:13.3px;top:163.9px;font-size:9.2px;color:#fff;transform:scaleX(0.987);height:14px;line-height:14px;-webkit-text-stroke:0;">B6</div>
<div class="t" style="left:138.8px;top:163.4px;font-size:11.5px;color:#d0d0d0;transform:scaleX(1.094);height:14px;line-height:14px;font-weight:700;font-family:'Liberation Serif',serif;font-style:italic;-webkit-text-stroke:0;">fx</div>
<div class="t" style="left:126.0px;top:212.8px;font-size:10px;color:#e0e0e0;transform:scaleX(1.019);height:14px;line-height:14px;-webkit-text-stroke:0;">A</div>
<div class="t" style="left:246.2px;top:212.8px;font-size:10px;color:#e0e0e0;transform:scaleX(0.839);height:14px;line-height:14px;-webkit-text-stroke:0;">B</div>
<div class="t" style="left:363.0px;top:212.8px;font-size:10px;color:#e0e0e0;transform:scaleX(0.829);height:14px;line-height:14px;-webkit-text-stroke:0;">C</div>
<div class="t" style="left:485.7px;top:212.8px;font-size:10px;color:#e0e0e0;transform:scaleX(0.912);height:14px;line-height:14px;-webkit-text-stroke:0;">D</div>
<div class="t" style="left:558.5px;top:212.8px;font-size:10px;color:#e0e0e0;transform:scaleX(0.749);height:14px;line-height:14px;-webkit-text-stroke:0;">E</div>
<div class="t" style="left:606.2px;top:212.8px;font-size:10px;color:#e0e0e0;transform:scaleX(0.786);height:14px;line-height:14px;-webkit-text-stroke:0;">F</div>
<div class="t" style="left:652.3px;top:212.8px;font-size:10px;color:#e0e0e0;transform:scaleX(0.874);height:14px;line-height:14px;-webkit-text-stroke:0;">G</div>
<div class="t" style="left:39.0px;top:227.1px;font-size:10.8px;color:#ececec;transform:scaleX(0.598);height:14px;line-height:14px;-webkit-text-stroke:0;">1</div>
<div class="t" style="left:38.1px;top:242.9px;font-size:10.8px;color:#ececec;transform:scaleX(0.898);height:14px;line-height:14px;-webkit-text-stroke:0;">2</div>
<div class="t" style="left:38.1px;top:258.7px;font-size:10.8px;color:#ececec;transform:scaleX(0.898);height:14px;line-height:14px;-webkit-text-stroke:0;">3</div>
<div class="t" style="left:38.1px;top:273.9px;font-size:10.8px;color:#ececec;transform:scaleX(0.898);height:14px;line-height:14px;-webkit-text-stroke:0;">4</div>
<div class="t" style="left:38.1px;top:288.0px;font-size:10.8px;color:#ececec;transform:scaleX(0.898);height:14px;line-height:14px;-webkit-text-stroke:0;">5</div>
<div class="t" style="left:38.1px;top:302.1px;font-size:10.8px;color:#ececec;transform:scaleX(0.898);height:14px;line-height:14px;-webkit-text-stroke:0;">6</div>
<div class="t" style="left:38.1px;top:316.4px;font-size:10.8px;color:#ececec;transform:scaleX(0.898);height:14px;line-height:14px;-webkit-text-stroke:0;">7</div>
<div class="t" style="left:38.1px;top:330.6px;font-size:10.8px;color:#ececec;transform:scaleX(0.898);height:14px;line-height:14px;-webkit-text-stroke:0;">8</div>
<div class="t" style="left:38.1px;top:344.8px;font-size:10.8px;color:#ececec;transform:scaleX(0.898);height:14px;line-height:14px;-webkit-text-stroke:0;">9</div>
<div class="t" style="left:35.3px;top:358.9px;font-size:10.8px;color:#ececec;transform:scaleX(0.915);height:14px;line-height:14px;-webkit-text-stroke:0;">10</div>
<div class="t" style="left:36.1px;top:372.9px;font-size:10.8px;color:#ececec;transform:scaleX(0.838);height:14px;line-height:14px;-webkit-text-stroke:0;">11</div>
<div class="t" style="left:53.9px;top:227.6px;font-size:10.6px;color:#000;transform:scaleX(1.063);height:14px;line-height:14px;font-weight:700;font-family:'Liberation Serif',serif;">Generating random numbers</div>
<div class="t" style="left:124.3px;top:243.8px;font-size:9.6px;color:#111;transform:scaleX(0.975);height:14px;line-height:14px;-webkit-text-stroke:0;">45</div>
<div class="t" style="left:124.3px;top:258.8px;font-size:9.6px;color:#111;transform:scaleX(0.975);height:14px;line-height:14px;-webkit-text-stroke:0;">36</div>
<div class="t" style="left:124.3px;top:274.5px;font-size:9.6px;color:#111;transform:scaleX(0.975);height:14px;line-height:14px;-webkit-text-stroke:0;">34</div>
<div class="t" style="left:124.3px;top:288.6px;font-size:9.6px;color:#111;transform:scaleX(0.975);height:14px;line-height:14px;-webkit-text-stroke:0;">35</div>
<div class="t" style="left:124.3px;top:302.7px;font-size:9.6px;color:#111;transform:scaleX(0.975);height:14px;line-height:14px;-webkit-text-stroke:0;">24</div>
<div class="t" style="left:127.0px;top:317.0px;font-size:9.6px;color:#111;transform:scaleX(0.954);height:14px;line-height:14px;-webkit-text-stroke:0;">9</div>
<div class="t" style="left:124.3px;top:331.2px;font-size:9.6px;color:#111;transform:scaleX(0.975);height:14px;line-height:14px;-webkit-text-stroke:0;">42</div>
<div class="t" style="left:124.3px;top:345.4px;font-size:9.6px;color:#111;transform:scaleX(0.975);height:14px;line-height:14px;-webkit-text-stroke:0;">39</div>
<div class="t" style="left:124.3px;top:359.5px;font-size:9.6px;color:#111;transform:scaleX(0.975);height:14px;line-height:14px;-webkit-text-stroke:0;">32</div>
<div class="t" style="left:120.6px;top:391.4px;font-size:10.8px;color:#202020;transform:scaleX(0.847);height:14px;line-height:14px;font-weight:700;-webkit-text-stroke:0;">Sheet1</div>
<div class="t" style="left:9.0px;top:414.0px;font-size:8.3px;color:#f0f0f0;transform:scaleX(0.876);height:14px;line-height:14px;">Ready</div>
<div class="t" style="left:41.6px;top:414.0px;font-size:8.3px;color:#f0f0f0;transform:scaleX(0.941);height:14px;line-height:14px;">Sheet 1 of 1</div>
<div class="t" style="left:94.0px;top:414.0px;font-size:8.3px;color:#f0f0f0;transform:scaleX(0.922);height:14px;line-height:14px;">Workbook Statistics</div>
<div class="t" style="left:212.6px;top:414.0px;font-size:8.3px;color:#f0f0f0;transform:scaleX(0.937);height:14px;line-height:14px;">Accessibility: Good to go</div>
</div>
</div>
</body>
</html>
